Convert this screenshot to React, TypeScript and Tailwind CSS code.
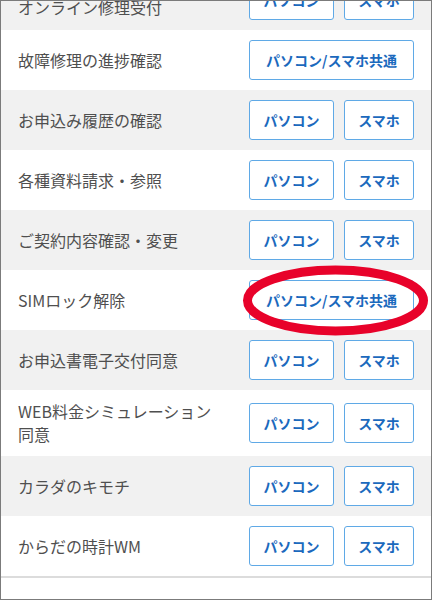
import React from 'react'

type Row = {
  label: string
  both?: boolean
  shift?: boolean
}

const rows: Row[] = [
  { label: 'オンライン修理受付', shift: true },
  { label: '故障修理の進捗確認', both: true },
  { label: 'お申込み履歴の確認' },
  { label: '各種資料請求・参照' },
  { label: 'ご契約内容確認・変更' },
  { label: 'SIMロック解除', both: true },
  { label: 'お申込書電子交付同意' },
  { label: 'WEB料金シミュレーション同意' },
  { label: 'カラダのキモチ' },
  { label: 'からだの時計WM' },
]

const btn =
  'flex h-10 items-center justify-center rounded-[3px] border border-[#5fa9e6] bg-white text-[14px] font-bold leading-none text-[#1b69bd]'

function Ellipse() {
  return (
    <svg
      className="pointer-events-none absolute left-[240px] top-[263px]"
      width="190"
      height="74"
      viewBox="0 0 190 74"
    >
      <ellipse cx="94.5" cy="36.5" rx="88" ry="30.5" fill="none" stroke="#e8022a" strokeWidth="9" />
    </svg>
  )
}

export default function App() {
  return (
    <div
      className="relative h-[600px] w-[432px] overflow-hidden border border-[#7b7b7b] bg-white"
      style={{ fontFamily: '"Noto Sans CJK JP", "Noto Sans", sans-serif' }}
    >
      <div className="-mt-[31px]">
        {rows.map((r, i) => (
          <div
            key={r.label}
            className={`flex items-center py-[10px] pl-[17px] pr-[17px] ${i % 2 === 0 ? 'bg-[#f1f1f1]' : 'bg-white'}`}
          >
            <div
              className={`w-[202px] text-[16px] leading-[23px] text-[#4f4f4f] ${r.shift ? 'mt-[14px]' : ''}`}
            >
              {r.label}
            </div>
            <div className="ml-auto flex gap-[10px]">
              {r.both ? (
                <div className={`${btn} w-[165px]`}>パソコン/スマホ共通</div>
              ) : (
                <>
                  <div className={`${btn} w-[85px]`}>パソコン</div>
                  <div className={`${btn} w-[70px]`}>スマホ</div>
                </>
              )}
            </div>
          </div>
        ))}
        <div className="h-[40px] border-t-2 border-[#dcdcdc] bg-white" />
      </div>
      <Ellipse />
    </div>
  )
}
